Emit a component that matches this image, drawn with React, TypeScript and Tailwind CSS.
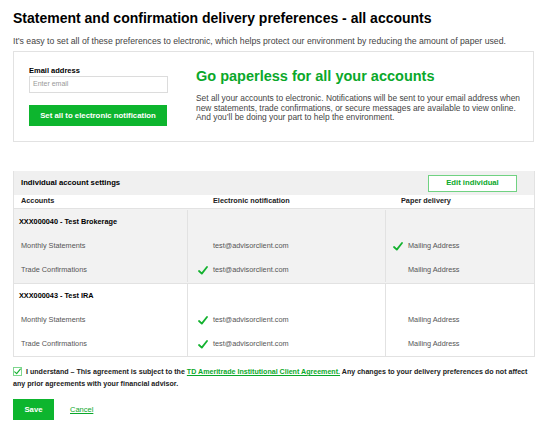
import React from "react";

const green = "text-[#0aa82a]";

function Check() {
  return (
    <svg width="10" height="9" viewBox="0 0 10 9" className="shrink-0">
      <path d="M1 5 L3.8 7.6 L9 1" fill="none" stroke="#13b22f" strokeWidth="1.8" strokeLinecap="round" strokeLinejoin="round" />
    </svg>
  );
}

type Row = { label: string; email: boolean; paper: boolean };
type Group = { title: string; rows: Row[]; shaded: boolean };

const groups: Group[] = [
  {
    title: "XXX000040 - Test Brokerage",
    shaded: true,
    rows: [
      { label: "Monthly Statements", email: false, paper: true },
      { label: "Trade Confirmations", email: true, paper: false },
    ],
  },
  {
    title: "XXX000043 - Test IRA",
    shaded: false,
    rows: [
      { label: "Monthly Statements", email: true, paper: false },
      { label: "Trade Confirmations", email: true, paper: false },
    ],
  },
];

export default function App() {
  return (
    <main className="h-[427px] w-[549px] overflow-hidden bg-white px-[13px] pt-[8px] font-['Liberation_Sans',Arial,sans-serif] text-[#222]">
      <h1 className="text-[14px] font-bold leading-[20px] text-black">
        Statement and confirmation delivery preferences - all accounts
      </h1>
      <p className="mt-[8px] text-[8.7px] leading-[10px] text-[#444]">
        It’s easy to set all of these preferences to electronic, which helps protect our environment by reducing the amount of paper used.
      </p>

      <section className="mt-[5px] flex h-[91px] w-[521px] border border-[#e2e2e2] pl-[15px] pt-[14px]">
        <div className="flex w-[167px] flex-col">
          <label className="text-[7.5px] font-bold leading-[9px] text-black">Email address</label>
          <div className="mt-[1px] flex h-[17px] w-[139px] items-center border border-[#dcdcdc] px-[3px] text-[7px] text-[#999]">
            Enter email
          </div>
          <button className="mt-[12px] flex h-[21px] w-[138px] items-center justify-center bg-[#0db52e] text-[7.8px] font-bold text-white">
            Set all to electronic notification
          </button>
        </div>
        <div className="flex flex-col pt-[1px]">
          <h2 className={`text-[14.5px] font-bold leading-[18px] ${green}`}>Go paperless for all your accounts</h2>
          <p className="mt-[9px] w-[334px] text-[8.4px] leading-[9.5px] text-[#444]">
            Set all your accounts to electronic. Notifications will be sent to your email address when new statements, trade confirmations, or secure messages are available to view online. And you’ll be doing your part to help the environment.
          </p>
        </div>
      </section>

      <section className="mt-[29px] w-[522px] border-x border-b border-[#e2e2e2] text-[7.3px]">
        <div className="flex h-[24px] items-center justify-between bg-[#f0f0f0] pl-[7px] pr-[17px]">
          <span className="text-[7.7px] font-bold text-black">Individual account settings</span>
          <button className={`flex h-[17px] w-[89px] items-center justify-center border border-[#70d282] bg-white text-[7.7px] font-bold ${green}`}>
            Edit individual
          </button>
        </div>
        <div className="flex h-[14px] items-center border-b border-[#e2e2e2] bg-white font-bold text-[#222]">
          <span className="w-[174px] pl-[7px]">Accounts</span>
          <span className="w-[198px] pl-[25px]">Electronic notification</span>
          <span className="pl-[15px]">Paper delivery</span>
        </div>
        {groups.map((g, gi) => (
          <div
            key={g.title}
            className={`flex ${g.shaded ? "bg-[#f2f2f2]" : "bg-white"} ${gi === 0 ? "border-b border-[#e2e2e2] py-[1px]" : ""}`}
          >
            <div className="w-[174px] border-r border-[#e2e2e2]">
              <div className="flex h-[24px] items-center pl-[5px] font-bold text-black">{g.title}</div>
              {g.rows.map((r) => (
                <div key={r.label} className="flex h-[24px] items-center pl-[7px] text-[#555]">
                  {r.label}
                </div>
              ))}
            </div>
            <div className="w-[198px] border-r border-[#e2e2e2]">
              <div className="h-[24px]" />
              {g.rows.map((r) => (
                <div key={r.label} className="flex h-[24px] items-center text-[#555]">
                  <span className="flex w-[25px] justify-center pl-[4px]">{r.email ? <Check /> : null}</span>
                  test@advisorclient.com
                </div>
              ))}
            </div>
            <div className="flex-1">
              <div className="h-[24px]" />
              {g.rows.map((r) => (
                <div key={r.label} className="flex h-[24px] items-center text-[#555]">
                  <span className="flex w-[22px] justify-center pl-[2px]">{r.paper ? <Check /> : null}</span>
                  Mailing Address
                </div>
              ))}
            </div>
          </div>
        ))}
      </section>

      <div className="mt-[9px] text-[7.1px] font-bold leading-[12px] text-[#222]">
        <span className="mr-[4px] inline-flex h-[9px] w-[9px] translate-y-[1px] items-center justify-center border border-[#7dd68d] bg-white align-baseline">
          <svg width="7" height="7" viewBox="0 0 10 9">
            <path d="M1 5 L3.8 7.6 L9 1" fill="none" stroke="#13b22f" strokeWidth="1.6" strokeLinecap="round" strokeLinejoin="round" />
          </svg>
        </span>
        I understand – This agreement is subject to the{" "}
        <a className={`underline ${green}`}>TD Ameritrade Institutional Client Agreement.</a> Any changes to your delivery preferences do not affect any prior agreements with your financial advisor.
      </div>

      <div className="mt-[9px] flex items-center gap-[16px]">
        <button className="flex h-[21px] w-[41px] items-center justify-center bg-[#0db52e] text-[7.8px] font-bold text-white">
          Save
        </button>
        <a className={`text-[7.5px] underline ${green}`}>Cancel</a>
      </div>
    </main>
  );
}
